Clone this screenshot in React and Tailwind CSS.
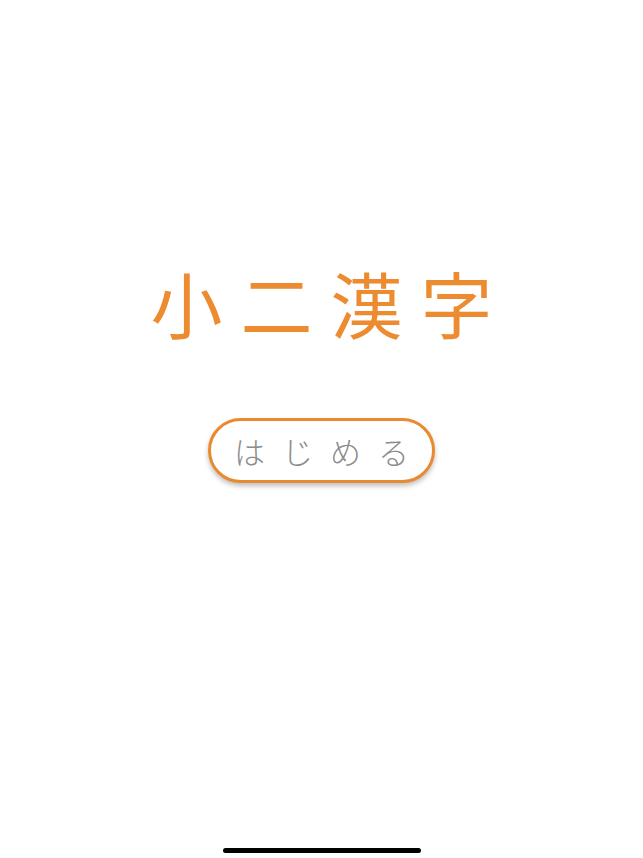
import React from 'react';

const App = () => {
  return (
    <div className="h-[858px] w-full bg-white flex flex-col items-center overflow-hidden"
      style={{ fontFamily: '"Noto Sans CJK JP", "Noto Sans", sans-serif' }}>
      <h1 className="mt-[266px] text-[72px] leading-none font-normal tracking-[18px] pl-[18px] text-[#ec8b2f]">
        小二漢字
      </h1>

      <button className="mt-[80px] w-[227px] h-[65px] rounded-full border-[3px] border-[#ea8a30] bg-white shadow-[0_3px_5px_rgba(0,0,0,0.25)] flex items-center justify-center cursor-pointer">
        <span className="text-[31px] font-light leading-none tracking-[17px] pl-[17px] text-[#8c8c8c]">はじめる</span>
      </button>

      <div className="mt-auto mb-[5px] w-[198px] h-[5px] rounded-full bg-black" />
    </div>
  );
};

export default App;
